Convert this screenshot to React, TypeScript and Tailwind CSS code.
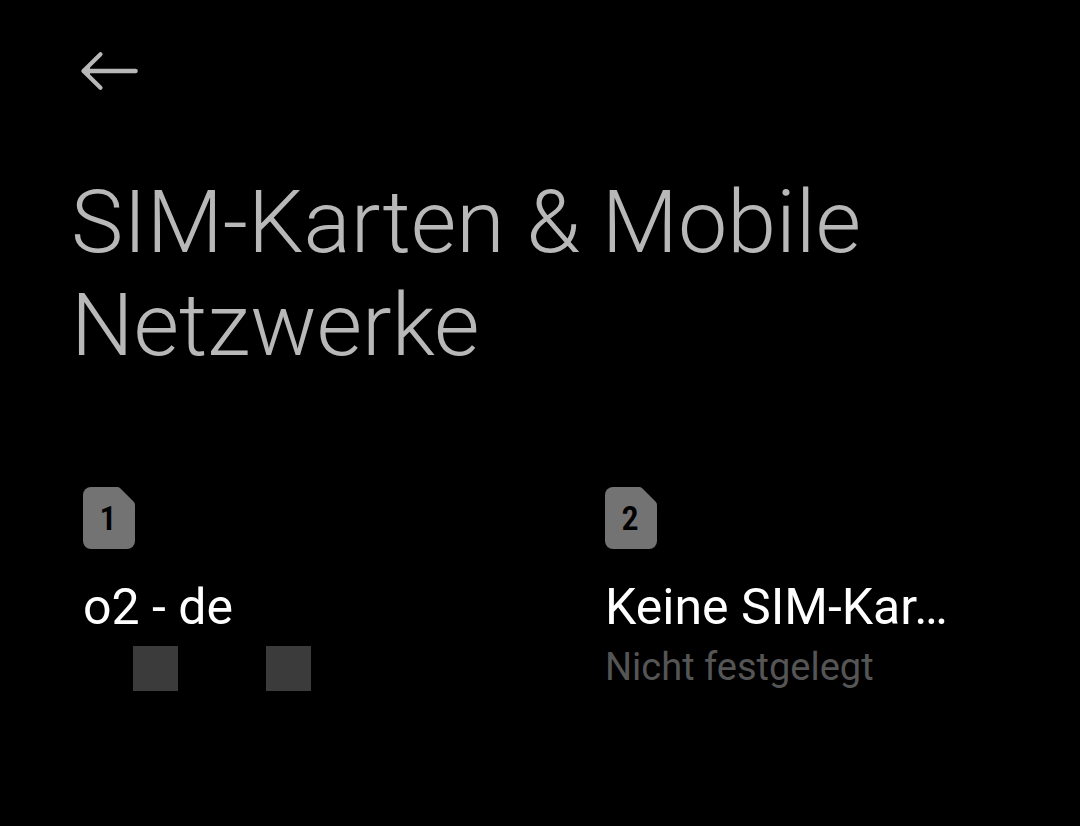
import React from 'react';

interface SimSlot {
  slot: string;
  name: string;
  detail?: string;
}

const slots: SimSlot[] = [
  { slot: '1', name: 'o2 - de' },
  { slot: '2', name: 'Keine SIM-Kar…', detail: 'Nicht festgelegt' },
];

const BackIcon: React.FC = () => (
  <svg width="58" height="40" viewBox="0 0 58 40" fill="none" stroke="currentColor" strokeLinecap="round" strokeLinejoin="round" aria-hidden="true">
    <path strokeWidth="4.600" d="M55.500 20H4" />
    <path strokeWidth="4.200" d="M20.500 3.200L3.500 20l17 16.800" />
    <path fill="currentColor" stroke="none" d="M3 20l7-4.500v9z" />
  </svg>
);

const SimBadge: React.FC<{ slot: string }> = ({ slot }) => (
  <div className="grid h-[62px] w-[52px] place-items-center">
    <svg className="col-start-1 row-start-1" width="52" height="62" viewBox="0 0 52 62" fill="#737373" aria-hidden="true">
      <path d="M8 0h25.500c1.600 0 2.800.4 4 1.500l13 13c1.100 1.200 1.500 2.400 1.500 4V54a8 8 0 0 1-8 8H8a8 8 0 0 1-8-8V8a8 8 0 0 1 8-8z" />
    </svg>
    <span className="col-start-1 row-start-1 pr-0.5 font-['Roboto_Condensed','Roboto',sans-serif] text-[34px] leading-none font-semibold text-black">
      {slot}
    </span>
  </div>
);

const SimCard: React.FC<{ sim: SimSlot }> = ({ sim }) => (
  <button type="button" className="flex min-w-0 flex-col items-start text-left">
    <SimBadge slot={sim.slot} />
    <span className="mt-7 text-[50px] leading-[60px] whitespace-nowrap text-white">{sim.name}</span>
    {sim.detail ? (
      <span className="mt-2 text-[38px] leading-11 text-[#555555]">{sim.detail}</span>
    ) : (
      // phone number is masked
      <span className="mt-[9px] ml-[50px] flex gap-[88px]">
        <span className="size-[45px] bg-[#3b3b3b]" />
        <span className="size-[45px] bg-[#3b3b3b]" />
      </span>
    )}
  </button>
);

const App: React.FC = () => {
  return (
    <div className="min-h-screen bg-black font-['Roboto',sans-serif]">
      <header className="px-[71px] pt-[51px]">
        <button type="button" aria-label="Zurück" className="ml-[9px] block text-[#b8b8b8]">
          <BackIcon />
        </button>
        <h1 className="mt-[79px] text-[88px] leading-[103px] font-light text-[#b8b8b8]">
          SIM-Karten &amp; Mobile Netzwerke
        </h1>
      </header>
      <main className="mt-[111px] grid grid-cols-2 gap-x-[47px] pl-[83px]">
        {slots.map((sim) => (
          <SimCard key={sim.slot} sim={sim} />
        ))}
      </main>
    </div>
  );
};

export default App;
